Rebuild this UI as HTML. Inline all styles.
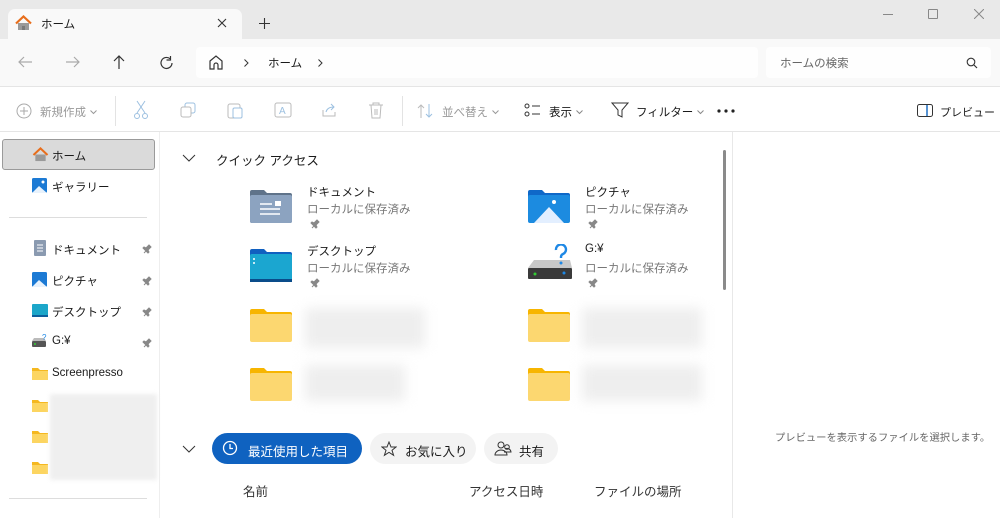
<!DOCTYPE html><html><head><meta charset="utf-8"><style>
*{margin:0;padding:0;box-sizing:border-box}
body{width:1000px;height:518px;position:relative;overflow:hidden;background:#fff;font-family:"Liberation Sans","Noto Sans CJK JP",sans-serif;font-size:11.5px;color:#1a1a1a;white-space:nowrap}
.a{position:absolute}
.g{color:#777}
.blur{position:absolute;background:#eeeeee;filter:blur(6px)}
.pin{position:absolute;width:10px;height:10px}
.dd{display:inline-block;width:7px;height:5px;margin-left:4px;vertical-align:middle}
</style></head><body>
<!-- title bar -->
<div class="a" style="left:0;top:0;width:1000px;height:39px;background:#e9e9e9"></div>
<div class="a" style="left:8px;top:9px;width:234px;height:30px;background:#f9f9f9;border-radius:7px 7px 0 0"></div>
<svg class="a" style="left:15px;top:15px" width="17" height="16" viewBox="0 0 17 16"><path d="M3 8v7h11V8" fill="#9a9a9a"/><path d="M7 15v-4h3v4" fill="#7a7a7a"/><path d="M1 8.5L8.5 1.5 16 8.5" stroke="#e86e1c" stroke-width="2.2" fill="none"/></svg>
<div class="a" style="left:41px;top:16px;font-size:11.5px">ホーム</div>
<svg class="a" style="left:217px;top:18px" width="10" height="10"><path d="M1 1l8 8M9 1L1 9" stroke="#333" stroke-width="1.1"/></svg>
<svg class="a" style="left:259px;top:18px" width="11" height="11"><path d="M5.5 0v11M0 5.5h11" stroke="#333" stroke-width="1.1"/></svg>
<div class="a" style="left:883px;top:14px;width:10px;height:1px;background:#888"></div>
<div class="a" style="left:928px;top:9px;width:10px;height:10px;border:1px solid #888;border-radius:1px"></div>
<svg class="a" style="left:974px;top:9px" width="10" height="10"><path d="M0 0l10 10M10 0L0 10" stroke="#888"/></svg>
<!-- nav row -->
<div class="a" style="left:0;top:39px;width:1000px;height:48px;background:#f9f9f9;border-bottom:1px solid #e5e5e5"></div>
<svg class="a" style="left:17px;top:55px" width="16" height="14"><path d="M15 7H2M7 2L2 7l5 5" stroke="#aaa" stroke-width="1.2" fill="none"/></svg>
<svg class="a" style="left:65px;top:55px" width="16" height="14"><path d="M1 7h13M9 2l5 5-5 5" stroke="#aaa" stroke-width="1.2" fill="none"/></svg>
<svg class="a" style="left:112px;top:54px" width="14" height="16"><path d="M7 15V2M2 7l5-5 5 5" stroke="#333" stroke-width="1.2" fill="none"/></svg>
<svg class="a" style="left:159px;top:55px" width="16" height="16"><path d="M13 8a5.5 5.5 0 1 1-2-4.3M11.5 1v4h-4" stroke="#333" stroke-width="1.2" fill="none"/></svg>
<div class="a" style="left:196px;top:47px;width:562px;height:31px;background:#fefefe;border-radius:4px"></div>
<svg class="a" style="left:208px;top:54px" width="16" height="17"><path d="M2 7L8 2l6 5v8H10v-4a2 2 0 0 0-4 0v4H2z" stroke="#333" stroke-width="1.2" fill="none"/></svg>
<svg class="a" style="left:244px;top:59px" width="5" height="8"><path d="M0.5 0.5l3.5 3.5-3.5 3.5" stroke="#333" fill="none"/></svg>
<div class="a" style="left:268px;top:55px">ホーム</div>
<svg class="a" style="left:318px;top:59px" width="5" height="8"><path d="M0.5 0.5l3.5 3.5-3.5 3.5" stroke="#333" fill="none"/></svg>
<div class="a" style="left:766px;top:47px;width:225px;height:31px;background:#fefefe;border-radius:4px"></div>
<div class="a g" style="left:780px;top:55px;color:#666">ホームの検索</div>
<svg class="a" style="left:966px;top:57px" width="12" height="12"><circle cx="5" cy="5" r="3.8" stroke="#333" stroke-width="1.1" fill="none"/><path d="M8 8l3 3" stroke="#333" stroke-width="1.2"/></svg>
<!-- toolbar -->
<div class="a" style="left:0;top:131px;width:1000px;height:1px;background:#e5e5e5"></div>
<svg class="a" style="left:15px;top:102px" width="18" height="18"><circle cx="9" cy="9" r="7" stroke="#aaa" fill="none"/><path d="M9 5v8M5 9h8" stroke="#aaa"/></svg>
<div class="a" style="left:40px;top:104px;color:#999">新規作成<svg class="dd"><path d="M0.5 0.5l3 3 3-3" stroke="#999" fill="none"/></svg></div>
<div class="a" style="left:115px;top:96px;width:1px;height:30px;background:#e3e3e3"></div>
<svg class="a" style="left:133px;top:100px" width="16" height="20"><path d="M4 1l8 12M12 1L4 13" stroke="#9cc0e0" fill="none"/><circle cx="4" cy="16" r="2.5" stroke="#9cc0e0" fill="none"/><circle cx="12" cy="16" r="2.5" stroke="#9cc0e0" fill="none"/></svg>
<svg class="a" style="left:180px;top:102px" width="16" height="16"><rect x="5" y="1" width="10" height="10" rx="2" stroke="#9cc0e0" fill="none"/><rect x="1" y="5" width="10" height="10" rx="2" stroke="#bbb" fill="#fff"/></svg>
<svg class="a" style="left:227px;top:101px" width="16" height="18"><rect x="1" y="3" width="12" height="14" rx="2" stroke="#bbb" fill="none"/><rect x="6" y="7" width="9" height="10" rx="1.5" stroke="#9cc0e0" fill="#fff"/></svg>
<svg class="a" style="left:274px;top:102px" width="18" height="16"><rect x="1" y="1" width="16" height="14" rx="2" stroke="#bbb" fill="none"/><text x="5" y="12" font-size="10" fill="#9cc0e0">A</text></svg>
<svg class="a" style="left:321px;top:102px" width="16" height="16"><path d="M2 8v6h12V10" stroke="#bbb" fill="none"/><path d="M5 10c1-4 4-5 8-5M10 2l3 3-3 3" stroke="#9cc0e0" fill="none"/></svg>
<svg class="a" style="left:368px;top:101px" width="16" height="18"><path d="M1 4h14M5 4V2h6v2M3 4l1 13h8l1-13M7 8v6M9 8v6" stroke="#bbb" fill="none"/></svg>
<div class="a" style="left:402px;top:96px;width:1px;height:30px;background:#e3e3e3"></div>
<svg class="a" style="left:417px;top:103px" width="18" height="16"><path d="M4 15V2M1 5l3-3 3 3" stroke="#bbb" fill="none"/><path d="M12 1v13M9 11l3 3 3-3" stroke="#9cc0e0" fill="none"/></svg>
<div class="a" style="left:442px;top:104px;color:#999">並べ替え<svg class="dd"><path d="M0.5 0.5l3 3 3-3" stroke="#999" fill="none"/></svg></div>
<svg class="a" style="left:524px;top:103px" width="18" height="14"><circle cx="3" cy="3" r="2" stroke="#333" fill="none"/><circle cx="3" cy="11" r="2" stroke="#333" fill="none"/><path d="M8 3h8M8 11h8" stroke="#333"/></svg>
<div class="a" style="left:549px;top:104px">表示<svg class="dd"><path d="M0.5 0.5l3 3 3-3" stroke="#888" fill="none"/></svg></div>
<svg class="a" style="left:611px;top:101px" width="18" height="18"><path d="M1 2h16l-6 7v7l-4-2V9z" stroke="#333" fill="none"/></svg>
<div class="a" style="left:636px;top:104px">フィルター<svg class="dd"><path d="M0.5 0.5l3 3 3-3" stroke="#888" fill="none"/></svg></div>
<svg class="a" style="left:717px;top:109px" width="18" height="4"><circle cx="2" cy="2" r="1.6" fill="#222"/><circle cx="9" cy="2" r="1.6" fill="#222"/><circle cx="16" cy="2" r="1.6" fill="#222"/></svg>
<svg class="a" style="left:917px;top:104px" width="16" height="13"><rect x="0.5" y="0.5" width="15" height="12" rx="2" stroke="#333" fill="none"/><path d="M10 1v11" stroke="#1e6fc4" stroke-width="1.5"/></svg>
<div class="a" style="left:940px;top:104px;font-size:11px">プレビュー</div>
<!-- sidebar -->
<div class="a" style="left:2px;top:139px;width:153px;height:31px;background:#dadada;border:1px solid #9a9a9a;border-radius:3px"></div>
<svg class="a" style="left:32px;top:147px" width="17" height="15" viewBox="0 0 17 16"><path d="M3 8v7h11V8" fill="#9a9a9a"/><path d="M1 8.5L8.5 1.5 16 8.5" stroke="#e86e1c" stroke-width="2.2" fill="none"/></svg>
<div class="a" style="left:52px;top:148px">ホーム</div>
<svg class="a" style="left:32px;top:178px" width="15" height="15"><rect width="15" height="15" rx="1.5" fill="#1c7ad4"/><path d="M0 15L7 8l8 7z" fill="#e8f2fc"/><circle cx="11" cy="4" r="1.5" fill="#fff"/></svg>
<div class="a" style="left:52px;top:179px">ギャラリー</div>
<div class="a" style="left:9px;top:217px;width:138px;height:1px;background:#ddd"></div>
<svg class="a" style="left:34px;top:240px" width="12" height="16"><rect width="12" height="16" rx="1" fill="#8a9ab0"/><path d="M3 5h6M3 8h6M3 11h6" stroke="#fff"/></svg>
<div class="a" style="left:52px;top:242px">ドキュメント</div>
<svg class="a" style="left:32px;top:272px" width="15" height="15"><rect width="15" height="15" rx="1.5" fill="#1c7ad4"/><path d="M0 15L7 8l8 7z" fill="#e8f2fc"/></svg>
<div class="a" style="left:52px;top:273px">ピクチャ</div>
<svg class="a" style="left:32px;top:304px" width="16" height="13"><rect width="16" height="13" rx="1" fill="#1ba6c9"/><rect y="11" width="16" height="2" fill="#0d5f9c"/></svg>
<div class="a" style="left:52px;top:304px">デスクトップ</div>
<svg class="a" style="left:32px;top:334px" width="16" height="13"><rect y="7" width="14" height="6" rx="1" fill="#555"/><path d="M0 7h14l-2-3H2z" fill="#bbb"/><circle cx="3" cy="10" r="1" fill="#3c3"/><text x="10" y="6" font-size="8" fill="#1e88e5">?</text></svg>
<div class="a" style="left:52px;top:335px">G:¥</div>
<svg class="a" style="left:32px;top:367px" width="16" height="13"><path d="M0 1h6l2 2h8v10H0z" fill="#f5b820"/><rect y="4" width="16" height="9" fill="#fcd561"/></svg>
<div class="a" style="left:52px;top:367px">Screenpresso</div>
<svg class="a" style="left:32px;top:399px" width="16" height="13"><path d="M0 1h6l2 2h8v10H0z" fill="#f5b820"/><rect y="4" width="16" height="9" fill="#fcd561"/></svg>
<svg class="a" style="left:32px;top:430px" width="16" height="13"><path d="M0 1h6l2 2h8v10H0z" fill="#f5b820"/><rect y="4" width="16" height="9" fill="#fcd561"/></svg>
<svg class="a" style="left:32px;top:461px" width="16" height="13"><path d="M0 1h6l2 2h8v10H0z" fill="#f5b820"/><rect y="4" width="16" height="9" fill="#fcd561"/></svg>
<div class="a" style="left:50px;top:394px;width:107px;height:86px;background:#efefef;filter:blur(2px)"></div>
<div class="a" style="left:9px;top:498px;width:138px;height:1px;background:#ddd"></div>
<!-- pins sidebar -->
<svg class="pin" style="left:142px;top:244px"><path d="M2 9l3-3M4 4l3-3 2 2-3 3 1 2-1 1-5-5 1-1z" fill="#888" stroke="#888"/></svg>
<svg class="pin" style="left:142px;top:276px"><path d="M2 9l3-3M4 4l3-3 2 2-3 3 1 2-1 1-5-5 1-1z" fill="#888" stroke="#888"/></svg>
<svg class="pin" style="left:142px;top:307px"><path d="M2 9l3-3M4 4l3-3 2 2-3 3 1 2-1 1-5-5 1-1z" fill="#888" stroke="#888"/></svg>
<svg class="pin" style="left:142px;top:338px"><path d="M2 9l3-3M4 4l3-3 2 2-3 3 1 2-1 1-5-5 1-1z" fill="#888" stroke="#888"/></svg>
<div class="a" style="left:159px;top:132px;width:1px;height:386px;background:#eee"></div>
<!-- main -->
<svg class="a" style="left:182px;top:154px" width="14" height="8"><path d="M1 1l6 6 6-6" stroke="#333" fill="none"/></svg>
<div class="a" style="left:216px;top:150px;font-size:12.5px">クイック アクセス</div>
<div class="a" style="left:723px;top:150px;width:3px;height:140px;background:#8a8a8a;border-radius:2px"></div>
<!-- docs -->
<svg class="a" style="left:250px;top:189px" width="42" height="34"><path d="M0 3a2 2 0 0 1 2-2h12l3 3h23a2 2 0 0 1 2 2v26a2 2 0 0 1-2 2H2a2 2 0 0 1-2-2z" fill="#5f738a"/><rect y="6" width="42" height="28" rx="2" fill="#8ca3c0"/><path d="M10 15h12M10 20h20M10 25h20" stroke="#fff" stroke-width="1.6"/><rect x="25" y="12" width="6" height="5" fill="#fff"/></svg>
<div class="a" style="left:307px;top:184px">ドキュメント</div>
<div class="a g" style="left:307px;top:201px">ローカルに保存済み</div>
<svg class="pin" style="left:310px;top:219px"><path d="M2 9l3-3M4 4l3-3 2 2-3 3 1 2-1 1-5-5 1-1z" fill="#888" stroke="#888"/></svg>
<!-- desktop -->
<svg class="a" style="left:250px;top:248px" width="42" height="34"><path d="M0 3a2 2 0 0 1 2-2h12l3 3h23a2 2 0 0 1 2 2v26H0z" fill="#1060c0"/><rect y="6" width="42" height="28" rx="2" fill="#1ba6d0"/><rect y="31" width="42" height="3" fill="#0a4c8a"/><circle cx="4" cy="11" r="1" fill="#fff"/><circle cx="4" cy="15" r="1" fill="#fff"/></svg>
<div class="a" style="left:307px;top:243px">デスクトップ</div>
<div class="a g" style="left:307px;top:260px">ローカルに保存済み</div>
<svg class="pin" style="left:310px;top:278px"><path d="M2 9l3-3M4 4l3-3 2 2-3 3 1 2-1 1-5-5 1-1z" fill="#888" stroke="#888"/></svg>
<!-- pictures -->
<svg class="a" style="left:528px;top:189px" width="42" height="34"><path d="M0 3a2 2 0 0 1 2-2h12l3 3h23a2 2 0 0 1 2 2v26H0z" fill="#0f68c8"/><rect y="6" width="42" height="28" rx="2" fill="#1c8be0"/><path d="M6 34L21 18l15 16z" fill="#e3efff"/><circle cx="26" cy="13" r="2" fill="#fff"/></svg>
<div class="a" style="left:585px;top:184px">ピクチャ</div>
<div class="a g" style="left:585px;top:201px">ローカルに保存済み</div>
<svg class="pin" style="left:588px;top:219px"><path d="M2 9l3-3M4 4l3-3 2 2-3 3 1 2-1 1-5-5 1-1z" fill="#888" stroke="#888"/></svg>
<!-- G drive -->
<svg class="a" style="left:528px;top:244px" width="44" height="36"><path d="M0 24l6-8h36l2 8z" fill="#c8c8c8"/><rect y="24" width="44" height="11" rx="1" fill="#3a3a3a"/><circle cx="7" cy="30" r="1.5" fill="#3c3"/><circle cx="36" cy="29" r="1.5" fill="#1e88e5"/><path d="M28 6a5 5 0 1 1 7 4c-2 1-2 2-2 4" stroke="#1e88e5" stroke-width="2.4" fill="none"/><circle cx="33" cy="19" r="1.5" fill="#1e88e5"/></svg>
<div class="a" style="left:585px;top:243px">G:¥</div>
<div class="a g" style="left:585px;top:260px">ローカルに保存済み</div>
<svg class="pin" style="left:588px;top:278px"><path d="M2 9l3-3M4 4l3-3 2 2-3 3 1 2-1 1-5-5 1-1z" fill="#888" stroke="#888"/></svg>
<!-- yellow folders -->
<svg class="a" style="left:250px;top:308px" width="42" height="34"><path d="M0 3a2 2 0 0 1 2-2h12l3 3h23a2 2 0 0 1 2 2v26H0z" fill="#f7b500"/><rect y="6" width="42" height="28" rx="2" fill="#fcd770"/></svg>
<svg class="a" style="left:250px;top:367px" width="42" height="34"><path d="M0 3a2 2 0 0 1 2-2h12l3 3h23a2 2 0 0 1 2 2v26H0z" fill="#f7b500"/><rect y="6" width="42" height="28" rx="2" fill="#fcd770"/></svg>
<svg class="a" style="left:528px;top:308px" width="42" height="34"><path d="M0 3a2 2 0 0 1 2-2h12l3 3h23a2 2 0 0 1 2 2v26H0z" fill="#f7b500"/><rect y="6" width="42" height="28" rx="2" fill="#fcd770"/></svg>
<svg class="a" style="left:528px;top:367px" width="42" height="34"><path d="M0 3a2 2 0 0 1 2-2h12l3 3h23a2 2 0 0 1 2 2v26H0z" fill="#f7b500"/><rect y="6" width="42" height="28" rx="2" fill="#fcd770"/></svg>
<div class="blur" style="left:305px;top:308px;width:120px;height:40px"></div>
<div class="blur" style="left:305px;top:365px;width:100px;height:36px"></div>
<div class="blur" style="left:582px;top:308px;width:120px;height:40px"></div>
<div class="blur" style="left:582px;top:365px;width:120px;height:36px"></div>
<!-- recent -->
<svg class="a" style="left:182px;top:445px" width="14" height="8"><path d="M1 1l6 6 6-6" stroke="#333" fill="none"/></svg>
<div class="a" style="left:212px;top:433px;width:150px;height:31px;background:#0f62c0;border-radius:16px"></div>
<svg class="a" style="left:222px;top:440px" width="16" height="16"><circle cx="8" cy="8" r="6.5" stroke="#fff" stroke-width="1.3" fill="none"/><path d="M8 4v4.5h3" stroke="#fff" stroke-width="1.3" fill="none"/></svg>
<div class="a" style="left:248px;top:441px;color:#fff;font-size:12.5px">最近使用した項目</div>
<div class="a" style="left:370px;top:433px;width:106px;height:31px;background:#f3f3f3;border-radius:16px"></div>
<svg class="a" style="left:381px;top:441px" width="16" height="16"><path d="M8 1l2 5h5l-4 3.3 1.6 5L8 11.3 3.4 14.3 5 9.3 1 6h5z" stroke="#333" fill="none"/></svg>
<div class="a" style="left:405px;top:441px;font-size:12.5px">お気に入り</div>
<div class="a" style="left:484px;top:433px;width:74px;height:31px;background:#f3f3f3;border-radius:16px"></div>
<svg class="a" style="left:494px;top:440px" width="18" height="16"><circle cx="7" cy="5" r="3" stroke="#333" fill="none"/><circle cx="13" cy="7" r="2.3" stroke="#333" fill="none"/><path d="M1 15a6 5 0 0 1 12 0zM10 12h7a4 4 0 0 0-6-3" stroke="#333" fill="none"/></svg>
<div class="a" style="left:519px;top:441px;font-size:12.5px">共有</div>
<div class="a" style="left:243px;top:481px;font-size:12.5px;color:#333">名前</div>
<div class="a" style="left:469px;top:481px;font-size:12.5px;color:#333">アクセス日時</div>
<div class="a" style="left:594px;top:481px;font-size:12.5px;color:#333">ファイルの場所</div>
<!-- preview -->
<div class="a" style="left:732px;top:132px;width:1px;height:386px;background:#e8e8e8"></div>
<div class="a" style="left:775px;top:429px;font-size:10.3px;color:#666">プレビューを表示するファイルを選択します。</div>
</body></html>
